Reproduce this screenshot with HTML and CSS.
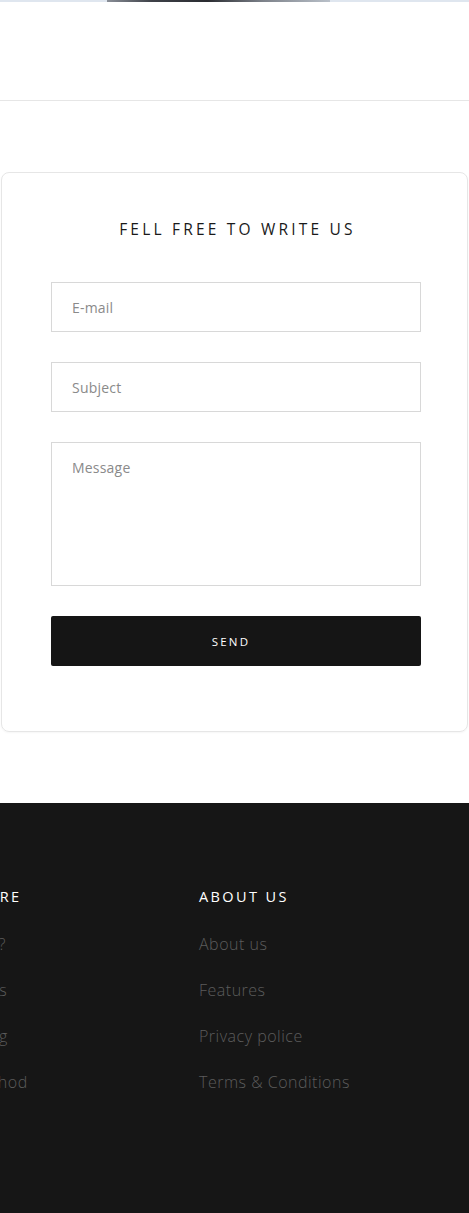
FILE: index.html
```html
<!DOCTYPE html>
<html lang="en">
<head>
<meta charset="utf-8">
<title>Contact</title>
<link rel="stylesheet" href="styles.css">
</head>
<body>
<div class="hero-strip"><div class="hero-img"></div></div>
<div class="top-space"></div>
<section class="contact">
  <div class="card">
    <form class="form">
      <h2 class="form-title">FELL FREE TO WRITE US</h2>
      <div class="field">E-mail</div>
      <div class="field">Subject</div>
      <div class="field field-area">Message</div>
      <button type="button" class="send">SEND</button>
    </form>
  </div>
</section>
<footer class="footer">
  <div class="footer-cols">
    <div class="col">
      <h3 class="col-title">SHOP &amp; MORE</h3>
      <ul class="links">
        <li>How to order?</li>
        <li>Delivery terms</li>
        <li>Order tracking</li>
        <li>Payment method</li>
      </ul>
    </div>
    <div class="col">
      <h3 class="col-title">ABOUT US</h3>
      <ul class="links">
        <li>About us</li>
        <li>Features</li>
        <li>Privacy police</li>
        <li>Terms &amp; Conditions</li>
      </ul>
    </div>
  </div>
</footer>
</body>
</html>
```
FILE: styles.css
```css
* { box-sizing: border-box; }
body {
  margin: 0;
  width: 469px;
  background: #fff;
  font-family: "Open Sans", "DejaVu Sans", sans-serif;
  overflow-x: hidden;
}
.hero-strip {
  height: 2px;
  background: #dfe6ef;
  display: flex;
}
.hero-img {
  margin-left: 107px;
  width: 223px;
  background: linear-gradient(90deg, #8a8f98 0%, #3e4148 20%, #2a2c31 45%, #7d828a 70%, #b9c0c9 100%);
}
.top-space {
  height: 99px;
  border-bottom: 1px solid #e6e6e6;
}
.contact {
  padding: 71px 0 71px 1px;
}
.card {
  width: 467px;
  border: 1px solid #e6e6e6;
  border-radius: 8px;
  box-shadow: 0 1px 2px rgba(0,0,0,0.04);
  padding: 45px 0 65px 49px;
}
.form {
  width: 370px;
  display: flex;
  flex-direction: column;
  gap: 30px;
}
.form-title {
  margin: 0 0 12px;
  text-align: center;
  font-size: 15.5px;
  font-weight: 500;
  letter-spacing: 3.2px;
  line-height: 22px;
  padding-left: 3px;
  color: #1a1a1a;
}
.field {
  height: 50px;
  border: 1px solid #d8d8d8;
  padding: 0 20px;
  display: flex;
  align-items: center;
  font-size: 14px;
  letter-spacing: 0.2px;
  color: #8a8a8a;
}
.field-area {
  height: 144px;
  align-items: flex-start;
  padding-top: 15px;
}
.send {
  height: 50px;
  border: 0;
  border-radius: 2px;
  background: #151515;
  color: #fff;
  font-family: inherit;
  font-size: 11.5px;
  font-weight: 500;
  letter-spacing: 2.2px;
  padding: 0 10px 0 0;
}
.footer {
  background: #161616;
  height: 410px;
  padding-top: 84px;
}
.footer-cols {
  display: grid;
  grid-template-columns: 302px 1fr;
  margin-left: -103px;
}
.col-title {
  margin: 0 0 27px;
  font-size: 14.5px;
  font-weight: 500;
  letter-spacing: 2.4px;
  line-height: 20px;
  color: #fff;
}
.links {
  list-style: none;
  margin: 0;
  padding: 0;
  display: flex;
  flex-direction: column;
  gap: 26px;
}
.links li {
  font-size: 16px;
  font-weight: 300;
  line-height: 20px;
  color: #5c5c5c;
  letter-spacing: 0.5px;
}
```
